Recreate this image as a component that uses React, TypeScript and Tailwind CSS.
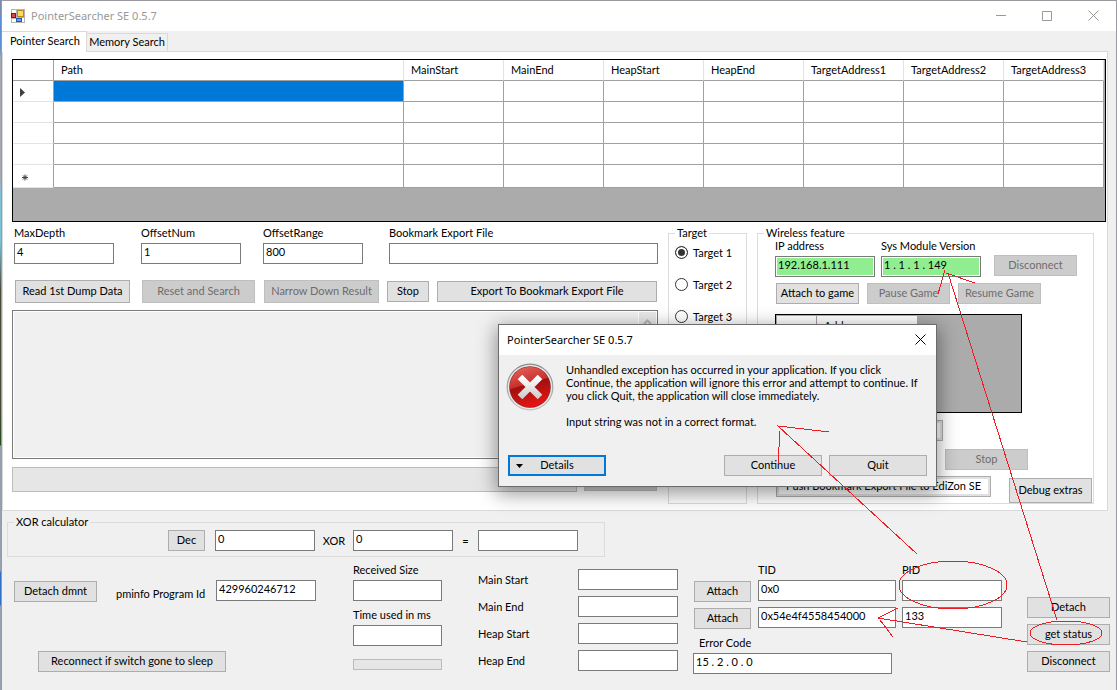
import React from 'react';
import { clsx } from 'clsx';

const columns = ['MainStart', 'MainEnd', 'HeapStart', 'HeapEnd', 'TargetAddress1', 'TargetAddress2', 'TargetAddress3'];

const memoryRanges = ['Main Start', 'Main End', 'Heap Start', 'Heap End'];

interface WinButtonProps extends React.ButtonHTMLAttributes<HTMLButtonElement> {
    className?: string;
}

const WinButton: React.FC<WinButtonProps> = ({ className, ...props }) => (
    <button
        type="button"
        className={clsx(
            'shrink-0 border pb-[2px] text-center whitespace-nowrap',
            props.disabled
                ? 'border-[#bfbfbf] bg-[#cccccc] text-[#6d6d6d]'
                : 'border-[#adadad] bg-[#e1e1e1] text-black',
            className
        )}
        {...props}
    />
);

interface TextFieldProps {
    id: string;
    value?: string;
    ok?: boolean;
    className?: string;
}

const TextField: React.FC<TextFieldProps> = ({ id, value = '', ok, className }) => (
    <input
        type="text"
        id={id}
        defaultValue={value}
        className={clsx(
            'block h-[21px] border border-[#7a7a7a] px-[2px] pb-[4px] outline-none',
            ok ? 'bg-[#90ee90] shadow-[inset_0_0_0_1px_#ffffff]' : 'bg-white',
            className
        )}
    />
);

interface LabeledFieldProps extends TextFieldProps {
    label: string;
    wrapper?: string;
}

const LabeledField: React.FC<LabeledFieldProps> = ({ label, wrapper, ...field }) => (
    <div className={clsx('flex flex-col gap-1', wrapper)}>
        <label htmlFor={field.id} className="leading-[12px] whitespace-nowrap">{label}</label>
        <TextField {...field} />
    </div>
);

const AppIcon = () => (
    <svg width="14" height="14" viewBox="0 0 14 14" shapeRendering="crispEdges">
        <rect width="14" height="14" fill="#b4b4b4" />
        <rect x="1" y="1" width="4" height="3" fill="#fff" />
        <rect x="1" y="10" width="4" height="3" fill="#fff" />
        <rect x="11" y="9" width="2" height="4" fill="#fff" />
        <rect x="0" y="4" width="5" height="5" fill="#8c1010" />
        <rect x="1" y="5" width="3" height="3" fill="#e0483c" />
        <rect x="6" y="1" width="7" height="7" fill="#c08a10" />
        <rect x="7" y="2" width="5" height="5" fill="#ffd764" />
        <rect x="5" y="9" width="6" height="4" fill="#2457b8" />
        <rect x="6" y="10" width="4" height="2" fill="#6c9cf0" />
    </svg>
);

const CloseIcon = () => (
    <svg width="11" height="11" viewBox="0 0 11 11" stroke="currentColor" fill="none">
        <path d="M.5.5l10 10M10.5.5l-10 10" />
    </svg>
);

const ErrorIcon = () => (
    <svg width="48" height="48" viewBox="0 0 48 48" className="-ml-px shrink-0">
        <defs>
            <linearGradient id="ring" x1="0" y1="0" x2="0" y2="1">
                <stop offset="0" stopColor="#8a8a8a" />
                <stop offset="1" stopColor="#c4c4c4" />
            </linearGradient>
            <linearGradient id="red" x1="0" y1="0" x2="0.3" y2="1">
                <stop offset="0" stopColor="#e8685e" />
                <stop offset="0.5" stopColor="#c8302c" />
                <stop offset="0.52" stopColor="#a01010" />
                <stop offset="1" stopColor="#e01414" />
            </linearGradient>
            <linearGradient id="cross" x1="0" y1="0" x2="0" y2="1">
                <stop offset="0" stopColor="#ffffff" />
                <stop offset="1" stopColor="#cfcfcf" />
            </linearGradient>
        </defs>
        <circle cx="24" cy="24" r="23.5" fill="url(#ring)" />
        <circle cx="24" cy="24" r="22.2" fill="#e9e9e9" />
        <circle cx="24" cy="24" r="20.8" fill="#8d2a2a" />
        <circle cx="24" cy="24" r="20.2" fill="url(#red)" />
        <path d="M14 14l20 20M34 14l-20 20" stroke="url(#cross)" strokeWidth="6.5" />
    </svg>
);

const TitleBar = () => (
    <header className="flex h-[30px] items-center bg-white pl-[9px] text-[#999999]">
        <AppIcon />
        <h1 className="ml-[6px] flex-1 pb-[2px] font-['Noto_Sans'] text-[11px]">PointerSearcher SE 0.5.7</h1>
        <button type="button" aria-label="Minimize" className="flex w-[46px] justify-center">
            <svg width="10" height="10" viewBox="0 0 10 10" stroke="currentColor"><path d="M0 4.500h10" /></svg>
        </button>
        <button type="button" aria-label="Maximize" className="flex w-[46px] justify-center">
            <svg width="10" height="10" viewBox="0 0 10 10" stroke="currentColor" fill="none"><path d="M.5.5h9v9h-9z" /></svg>
        </button>
        <button type="button" aria-label="Close" className="flex w-[46px] justify-center pb-px">
            <CloseIcon />
        </button>
    </header>
);

const PathGrid = () => (
    <div className="h-[163px] border border-black bg-[#ababab] pr-px">
        <table className="w-full table-fixed border-separate border-spacing-0 bg-white text-left">
            <thead>
                <tr className="h-[21px]">
                    <th className="w-[41px] border-r border-b border-[#a0a0a0]" aria-label="Row" />
                    <th className="border-r border-b border-r-[#e3e3e3] border-b-[#a0a0a0] px-[7px] pb-[2px] font-normal">Path</th>
                    {columns.map((name) => (
                        <th key={name} className="w-[100px] border-r border-b border-r-[#e3e3e3] border-b-[#a0a0a0] px-[7px] pb-[2px] font-normal">
                            {name}
                        </th>
                    ))}
                </tr>
            </thead>
            <tbody>
                {[0, 1, 2, 3, 4].map((row) => (
                    <tr key={row} className={row === 4 ? 'h-[23px]' : 'h-[21px]'}>
                        <td className="border-r border-b border-r-[#a0a0a0] border-b-[#e3e3e3] p-0 pt-[2px] pl-[7px]">
                            {row === 0 && (
                                <svg width="6" height="9" viewBox="0 0 6 9" fill="#404040"><path d="M0 0v9l5-4.500z" /></svg>
                            )}
                            {row === 4 && (
                                <svg width="8" height="7" viewBox="0 0 8 7" stroke="#404040">
                                    <path d="M5 .5v6M2 3.500h6M3 1.500l4 4M7 1.500l-4 4" />
                                </svg>
                            )}
                        </td>
                        <td className={clsx('border-r border-b border-[#a0a0a0]', row === 0 && 'bg-[#0078d7]')} />
                        {columns.map((name) => (
                            <td key={name} className="border-r border-b border-[#a0a0a0]" />
                        ))}
                    </tr>
                ))}
            </tbody>
        </table>
    </div>
);

const SearchPanel = () => (
    <section className="flex min-w-0 flex-1 flex-col">
        <div className="flex pl-[2px]">
            <LabeledField id="maxDepth" label="MaxDepth" value="4" wrapper="w-[127px]" className="w-[100px]" />
            <LabeledField id="offsetNum" label="OffsetNum" value="1" wrapper="w-[122px]" className="w-[100px]" />
            <LabeledField id="offsetRange" label="OffsetRange" value="800" wrapper="w-[126px]" className="w-[100px]" />
            <LabeledField id="bookmark" label="Bookmark Export File" wrapper="min-w-0 flex-1" className="w-full" />
        </div>
        <div className="mt-4 flex items-center pr-px pl-[3px]">
            <WinButton className="mr-3 h-[23px] w-[115px]">Read 1st Dump Data</WinButton>
            <WinButton className="mr-[9px] h-[23px] w-[113px]" disabled>Reset and Search</WinButton>
            <WinButton className="mr-2 h-[23px] w-[115px]" disabled>Narrow Down Result</WinButton>
            <WinButton className="mr-2 h-[21px] w-[42px]">Stop</WinButton>
            <WinButton className="h-[21px] flex-1">Export To Bookmark Export File</WinButton>
        </div>
        <div className="mt-[7px] flex h-[149px] border border-[#7a7a7a] bg-white p-px">
            <textarea aria-label="Log" readOnly className="block flex-1 resize-none bg-[#f0f0f0] outline-none" />
            <div className="flex w-[18px] justify-center border-l border-white bg-[#e8e8e8] pt-[7px]">
                <svg width="9" height="6" viewBox="0 0 9 6" stroke="#b5b5b5" strokeWidth="2" fill="none"><path d="M1 5l3.500-3.500L8 5" /></svg>
            </div>
        </div>
        <div className="mt-2 flex gap-[7px] pr-px">
            <div role="progressbar" aria-label="Search progress" className="h-[25px] flex-1 border border-[#bcbcbc] bg-[#e6e6e6]" />
            <WinButton className="h-6 w-[73px]" disabled aria-label="Search" />
        </div>
    </section>
);

const TargetGroup = () => (
    <fieldset className="w-[79px] border border-[#dcdcdc] pl-[6px]">
        <legend className="px-[2px] pb-px leading-[12px]">Target</legend>
        <div className="flex flex-col gap-[19px] pt-[6px]">
            {['Target 1', 'Target 2', 'Target 3'].map((name, i) => (
                <label key={name} className="flex items-center gap-[5px] leading-[12px] whitespace-nowrap">
                    <input
                        type="radio"
                        name="target"
                        defaultChecked={i === 0}
                        className="h-[13px] w-[13px] appearance-none rounded-full border border-[#333333] bg-white checked:bg-[#333333] checked:shadow-[inset_0_0_0_2px_#ffffff]"
                    />
                    {name}
                </label>
            ))}
        </div>
    </fieldset>
);

const WirelessGroup = () => (
    <fieldset className="w-[337px] border border-[#dcdcdc] pl-[17px]">
        <legend className="-ml-[11px] px-[2px] pb-px leading-[12px]">Wireless feature</legend>
        <div className="flex items-end gap-[6px]">
            <LabeledField id="ip" label="IP address" value="192.168.1.111" ok className="w-[100px]" />
            <LabeledField id="sysVersion" label="Sys Module Version" value="1 . 1 . 1 . 149" ok className="w-[100px]" />
            <WinButton className="mb-px ml-[7px] h-[21px] w-[83px]" disabled>Disconnect</WinButton>
        </div>
        <div className="mt-[6px] flex gap-2 pl-px">
            <WinButton className="h-[21px] w-[83px]">Attach to game</WinButton>
            <WinButton className="h-[21px] w-[83px]" disabled>Pause Game</WinButton>
            <WinButton className="h-[21px] w-[83px]" disabled>Resume Game</WinButton>
        </div>
        <div className="mt-[10px] h-[99px] w-[247px] border border-black bg-[#ababab] p-px">
            <table className="table-fixed border-separate border-spacing-0 bg-white text-left">
                <thead>
                    <tr className="h-[20px]">
                        <th className="w-[40px] border-r border-[#a0a0a0]" aria-label="Row" />
                        <th className="w-[100px] px-[7px] pb-[2px] font-normal">Address</th>
                    </tr>
                </thead>
            </table>
        </div>
        <div className="mt-[7px] pl-[85px]">
            <WinButton className="block h-[21px] w-[83px] !bg-white shadow-[inset_0_0_0_2px_#e1e1e1]" aria-label="Transfer" />
        </div>
        <div className="mt-2 pl-[170px]">
            <WinButton className="block h-[21px] w-[83px]" disabled>Stop</WinButton>
        </div>
        <div className="mt-[6px] flex justify-between pr-px pl-px">
            <WinButton className="h-[21px] w-[215px] !bg-white shadow-[inset_0_0_0_2px_#e1e1e1]">
                Push Bookmark Export File to EdiZon SE
            </WinButton>
            <WinButton className="mt-[2px] h-[25px] w-[83px]">Debug extras</WinButton>
        </div>
    </fieldset>
);

const XorCalculator = () => (
    <fieldset className="mt-[5px] ml-[5px] w-[598px] border border-[#dcdcdc] pb-[5px] pl-[160px]">
        <legend className="-ml-[154px] px-[2px] pb-px leading-[12px]">XOR calculator</legend>
        <div className="flex items-center pt-px">
            <WinButton className="mr-[10px] h-[21px] w-[37px]">Dec</WinButton>
            <TextField id="xorLeft" value="0" className="w-[100px]" />
            <label htmlFor="xorRight" className="w-[38px] text-center">XOR</label>
            <TextField id="xorRight" value="0" className="w-[100px]" />
            <label htmlFor="xorResult" className="w-[25px] text-center">=</label>
            <TextField id="xorResult" className="w-[100px]" />
        </div>
    </fieldset>
);

const StatusPanel = () => (
    <section className="flex items-start pr-[6px] pl-3">
        <div className="w-[339px] shrink-0 pt-[23px]">
            <div className="flex items-end">
                <WinButton className="h-[21px] w-[83px]">Detach dmnt</WinButton>
                <label htmlFor="programId" className="mb-[2px] ml-[19px] w-[100px]">pminfo Program Id</label>
                <TextField id="programId" value="429960246712" className="mb-px w-[100px]" />
            </div>
            <WinButton className="mt-[49px] ml-6 h-[21px] w-[188px]">Reconnect if switch gone to sleep</WinButton>
        </div>
        <div className="w-[125px] shrink-0 pt-[7px]">
            <LabeledField id="receivedSize" label="Received Size" className="w-[89px]" />
            <LabeledField id="timeUsed" label="Time used in ms" wrapper="mt-2" className="w-[89px]" />
            <div role="progressbar" aria-label="Transfer progress" className="mt-[13px] h-[11px] w-[89px] border border-[#bcbcbc] bg-[#e6e6e6]" />
        </div>
        <div className="flex w-[215px] shrink-0 flex-col gap-[6px] pt-3">
            {memoryRanges.map((name) => (
                <div key={name} className="flex items-center">
                    <label htmlFor={name} className="w-[100px]">{name}</label>
                    <TextField id={name} className="w-[100px]" />
                </div>
            ))}
        </div>
        <div className="shrink-0 pt-[7px]">
            <div className="flex gap-[6px] pl-px">
                <div className="flex w-[58px] flex-col gap-[6px] pt-[17px]">
                    <WinButton className="h-[21px] w-[57px]">Attach</WinButton>
                    <WinButton className="h-[21px] w-[57px]">Attach</WinButton>
                </div>
                <div className="flex flex-col gap-[6px]">
                    <LabeledField id="tid" label="TID" value="0x0" className="w-[138px]" />
                    <input type="text" aria-label="Game TID" defaultValue="0x54e4f4558454000" className="h-[21px] w-[138px] border border-[#7a7a7a] bg-white px-[2px] pb-[4px]" />
                </div>
                <div className="flex flex-col gap-[6px]">
                    <LabeledField id="pid" label="PID" className="w-[100px]" />
                    <input type="text" aria-label="Game PID" defaultValue="133" className="h-[21px] w-[100px] border border-[#7a7a7a] bg-white px-[2px] pb-[4px]" />
                </div>
            </div>
            <div className="mt-2 flex flex-col gap-1">
                <label htmlFor="errorCode" className="pl-[6px] leading-[12px]">Error Code</label>
                <TextField id="errorCode" value="15 . 2 . 0 . 0" className="w-[199px]" />
            </div>
        </div>
        <div className="ml-auto flex flex-col gap-[6px] pt-10">
            <WinButton className="h-[21px] w-[83px]">Detach</WinButton>
            <WinButton className="h-[21px] w-[83px]">get status</WinButton>
            <WinButton className="h-[21px] w-[83px]">Disconnect</WinButton>
        </div>
    </section>
);

const ErrorDialog = () => (
    <div
        role="dialog"
        aria-label="PointerSearcher SE 0.5.7"
        className="absolute top-[324px] left-[498px] w-[439px] border border-[#6b6b6b] bg-[#f0f0f0] shadow-[0_5px_18px_2px_rgba(0,0,0,0.4)]"
    >
        <div className="flex h-[30px] items-center justify-between bg-white pr-[10px] pb-[2px] pl-2">
            <h2 className="font-['Noto_Sans'] text-[11px]">PointerSearcher SE 0.5.7</h2>
            <button type="button" aria-label="Close"><CloseIcon /></button>
        </div>
        <div className="flex gap-3 pt-2 pr-2 pl-2">
            <ErrorIcon />
            <div>
                <p>
                    Unhandled exception has occurred in your application. If you click<br />
                    Continue, the application will ignore this error and attempt to continue. If<br />
                    you click Quit, the application will close immediately.
                </p>
                <p className="mt-[13px]">Input string was not in a correct format.</p>
            </div>
        </div>
        <div className="mt-[27px] flex gap-[7px] pr-[9px] pb-[10px] pl-[9px]">
            <button type="button" className="relative mr-auto h-[21px] w-[98px] border-2 border-[#0078d7] bg-[#e1e1e1] pb-[2px]">
                <svg width="7" height="4" viewBox="0 0 7 4" className="absolute top-[7px] left-[6px]"><path d="M0 0h7L3.500 4z" /></svg>
                Details
            </button>
            <WinButton className="h-[21px] w-[98px]">Continue</WinButton>
            <WinButton className="h-[21px] w-[98px]">Quit</WinButton>
        </div>
    </div>
);

// red pen marks drawn over the window
const Annotations = () => (
    <svg
        width="1117"
        height="690"
        viewBox="0 0 1117 690"
        fill="none"
        stroke="#ed1c24"
        shapeRendering="crispEdges"
        className="pointer-events-none absolute top-0 left-0"
    >
        <path d="M1057 620L948 273M945 270L938 294M946 273L975 283" />
        <path d="M917 554L778 426L829 432M780 431L778 464" />
        <path d="M1027 642L878 618L898 608M880 620L893 637" />
        <ellipse cx="953" cy="585" rx="54" ry="24" />
        <ellipse cx="1066" cy="633" rx="36" ry="12" />
    </svg>
);

const App: React.FC = () => (
    <div className="relative flex min-h-screen overflow-hidden bg-[#f0f0f0] font-['Lato',sans-serif] text-[11px] leading-[13px] text-black">
        <div className="w-px bg-[linear-gradient(#7b8ab0_0_16px,#5b8ed0_16px_48px,#a5a8b5_58px_180px,#7cc4dc_195px_240px,#4a4a38_290px_400px,#234a18_445px,#9aa0b0_446px_570px,#2f6fc8_573px_605px,#9aa0b0_606px)]" />
        <div className="min-w-0 flex-1 border-t border-r border-l border-[#9a9aa0]">
            <TitleBar />
            <div role="tablist" className="flex h-5 items-start">
                <button type="button" role="tab" aria-selected="true" className="relative h-[21px] w-[85px] border-t border-r border-[#d9d9d9] bg-white pb-[4px] pl-2 text-left whitespace-nowrap">
                    Pointer Search
                </button>
                <button type="button" role="tab" aria-selected="false" className="mt-[2px] h-[18px] w-[81px] border-t border-r border-[#d9d9d9] pb-[2px] whitespace-nowrap">
                    Memory Search
                </button>
            </div>
            <main className="mr-2 border border-[#d9d9d9] bg-white pt-[7px] pr-px pb-[6px] pl-[9px]">
                <PathGrid />
                <div className="mt-[5px] flex gap-[10px] pr-3">
                    <SearchPanel />
                    <TargetGroup />
                    <WirelessGroup />
                </div>
            </main>
            <XorCalculator />
            <StatusPanel />
        </div>
        <ErrorDialog />
        <Annotations />
    </div>
);

export default App;
